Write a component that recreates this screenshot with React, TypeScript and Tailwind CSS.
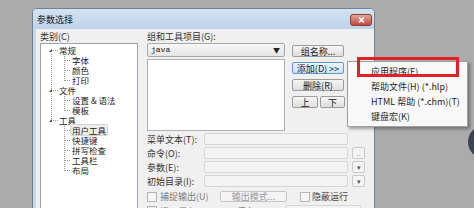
import React from 'react';

const cjk = { fontFamily: '"Noto Sans CJK SC", "Liberation Sans", sans-serif' };

type TreeRow = { label: string; level: 0 | 1; selected?: boolean };

const treeRows: TreeRow[] = [
  { label: '常规', level: 0 },
  { label: '字体', level: 1 },
  { label: '颜色', level: 1 },
  { label: '打印', level: 1 },
  { label: '文件', level: 0 },
  { label: '设置 & 语法', level: 1 },
  { label: '模板', level: 1 },
  { label: '工具', level: 0 },
  { label: '用户工具', level: 1, selected: true },
  { label: '快捷键', level: 1 },
  { label: '拼写检查', level: 1 },
  { label: '工具栏', level: 1 },
  { label: '布局', level: 1 },
];

const menuItems = ['应用程序(E)', '帮助文件(H) (*.hlp)', 'HTML 帮助 (*.chm)(T)', '键盘宏(K)'];

const Btn: React.FC<{ className?: string; active?: boolean; disabled?: boolean; children: React.ReactNode }> = ({
  className = '',
  active,
  disabled,
  children,
}) => (
  <div
    className={`flex items-center justify-center whitespace-nowrap rounded-[2px] border text-[9px] leading-none ${
      active
        ? 'border-[#5b9bd0] bg-gradient-to-b from-[#eaf4fc] to-[#c9e3f7] text-[#222]'
        : disabled
        ? 'border-[#c4c4c4] bg-[#f4f4f4] text-[#9a9a9a]'
        : 'border-[#9c9c9c] bg-gradient-to-b from-[#f6f6f6] to-[#dedede] text-[#222]'
    } ${className}`}
  >
    {children}
  </div>
);

const Field: React.FC<{ label: string; extra?: 'dots' | 'arrow' }> = ({ label, extra }) => (
  <div className="flex h-[12px] items-center">
    <div className="w-[57px] whitespace-nowrap text-[9px] leading-none text-[#333]">{label}</div>
    <div className="h-full w-[144px] rounded-[2px] border border-[#d6d6d6] bg-[#f3f3f3]" />
    {extra && (
      <div className="ml-[4px] flex h-[12px] w-[13px] items-center justify-center rounded-[2px] border border-[#c8c8c8] bg-[#f4f4f4] text-[7px] leading-none text-[#999]">
        {extra === 'dots' ? '..' : <span className="text-[#555]">▾</span>}
      </div>
    )}
  </div>
);

export default function App() {
  return (
    <div className="relative h-[208px] w-[474px] overflow-hidden bg-[#ababab]" style={cjk}>
      <div className="pl-[32px] pt-[8px]">
        <div className="w-[343px] overflow-hidden rounded-t-[5px] border border-[#6e8196] bg-[#f0f0f0]">
          {/* title bar */}
          <div className="flex h-[20px] items-center justify-between bg-gradient-to-b from-[#d5e3f1] to-[#bcd2e8] pl-[4px] pr-[2px]">
            <span className="text-[9px] leading-none text-[#1a1a1a]">参数选择</span>
            <div className="mt-[2px] flex h-[12px] w-[22px] items-center justify-center rounded-[3px] border border-[#8a3a30] bg-gradient-to-b from-[#e3a496] to-[#c0473a]">
              <svg width="7" height="6" viewBox="0 0 7 6">
                <path d="M1 0.5 L6 5.5 M6 0.5 L1 5.5" stroke="#fff" strokeWidth="1.6" />
              </svg>
            </div>
          </div>

          {/* body */}
          <div className="flex h-[220px] border-l-[3px] border-[#c8d9ea] pl-[4px] pt-[2px]">
            {/* category column */}
            <div className="w-[98px]">
              <div className="h-[12px] text-[9px] leading-[12px] text-[#333]">类别(C)</div>
              <div className="relative h-[200px] border border-[#9aa3ad] bg-white pt-[1px]">
                <svg className="absolute left-0 top-0" width="96" height="140">
                  <g stroke="#9a9a9a" strokeDasharray="1 1" strokeWidth="1">
                    <line x1="10.5" y1="10" x2="10.5" y2="46" />
                    <line x1="10.5" y1="50" x2="10.5" y2="76" />
                    <line x1="23.5" y1="10" x2="23.5" y2="37" />
                    <line x1="23.5" y1="50" x2="23.5" y2="67" />
                    <line x1="23.5" y1="80" x2="23.5" y2="127" />
                    <line x1="12" y1="6.5" x2="17" y2="6.5" />
                    <line x1="12" y1="46.5" x2="17" y2="46.5" />
                    <line x1="12" y1="76.5" x2="17" y2="76.5" />
                    {[16, 26, 36, 56, 66, 86, 96, 106, 116, 126].map((y) => (
                      <line key={y} x1="24" y1={y + 0.5} x2="30" y2={y + 0.5} />
                    ))}
                  </g>
                  {[6, 46, 76].map((y) => (
                    <path key={y} d={`M8 ${y + 2} L11 ${y + 2} L11 ${y - 1} Z`} fill="#444" />
                  ))}
                </svg>
                {treeRows.map((r) => (
                  <div
                    key={r.label}
                    className={`relative flex h-[10px] items-center whitespace-nowrap text-[8.5px] leading-none text-[#222] ${
                      r.level === 0 ? 'pl-[17px]' : 'pl-[30px]'
                    }`}
                  >
                    <span
                      className={`flex h-[10px] items-center px-[1px] ${
                        r.selected ? 'rounded-[1px] bg-[#ececec] outline outline-1 outline-[#d4d4d4]' : ''
                      }`}
                    >
                      {r.label}
                    </span>
                  </div>
                ))}
              </div>
            </div>

            {/* tools column */}
            <div className="ml-[9px] w-[220px]">
              <div className="h-[12px] text-[9px] leading-[12px] text-[#333]">组和工具项目(G):</div>
              <div className="flex">
                <div className="w-[138px]">
                  <div className="flex h-[14px] items-center justify-between rounded-[2px] border border-[#a8a8a8] bg-gradient-to-b from-[#f7f7f7] to-[#e4e4e4] pl-[3px] pr-[4px]">
                    <span className="text-[8px] leading-none text-[#222]" style={{ fontFamily: '"Liberation Mono", monospace' }}>
                      java
                    </span>
                    <span className="text-[7px] leading-none text-[#222]">▼</span>
                  </div>
                  <div className="mt-[2px] h-[72px] border border-[#a9b1ba] bg-white" />
                </div>
                <div className="ml-[7px] w-[53px]">
                  <Btn className="mt-[2px] h-[12px] w-[52px]">组名称...</Btn>
                  <Btn active className="mt-[5px] h-[12px] w-[52px]">
                    添加(D) &gt;&gt;
                  </Btn>
                  <Btn className="mt-[5px] h-[12px] w-[52px]">删除(R)</Btn>
                  <div className="mt-[5px] flex gap-[2px]">
                    <Btn className="h-[12px] w-[26px]">上</Btn>
                    <Btn className="h-[12px] w-[25px]">下</Btn>
                  </div>
                </div>
              </div>

              <div className="mt-[2px] flex flex-col gap-[2px]">
                <Field label="菜单文本(T):" />
                <Field label="命令(O):" extra="dots" />
                <Field label="参数(E):" extra="arrow" />
                <Field label="初始目录(I):" extra="arrow" />
              </div>

              <div className="mt-[4px] flex h-[11px] items-center whitespace-nowrap text-[9px] leading-none">
                <div className="h-[10px] w-[10px] border border-[#b5b5b5] bg-[#f6f6f6]" />
                <span className="ml-[3px] w-[60px] text-[#7a7a7a]">捕捉输出(U)</span>
                <Btn disabled className="h-[11px] w-[67px]">
                  输出模式...
                </Btn>
                <div className="ml-[13px] h-[10px] w-[10px] border border-[#b5b5b5] bg-[#f6f6f6]" />
                <span className="ml-[2px] text-[#444]">隐蔽运行</span>
              </div>

              <div className="mt-[3px] flex h-[12px] items-center whitespace-nowrap text-[9px] leading-none">
                <div className="h-[10px] w-[10px] border border-[#b5b5b5] bg-[#e9e9e9]" />
                <span className="ml-[3px] w-[77px] text-[#7a7a7a]">提示保存(A)</span>
                <span className="w-[49px] text-[#444]">保存(.):</span>
                <div className="h-full w-[75px] border border-[#d6d6d6] bg-[#f3f3f3]" />
              </div>
            </div>
          </div>
        </div>
      </div>

      {/* popup menu */}
      <div className="absolute left-[347px] top-[61px] h-[66px] w-[121px] border border-[#a0a0a0] bg-[#f8f8f8] pt-[2px] shadow-[2px_2px_3px_rgba(0,0,0,0.35)]">
        {menuItems.map((m) => (
          <div key={m} className="flex h-[15px] items-center whitespace-nowrap pl-[23px] text-[9px] leading-none text-[#1e1e1e]">
            {m}
          </div>
        ))}
      </div>

      {/* red annotation */}
      <div className="absolute left-[357px] top-[57px] h-[20px] w-[102px] border-[3px] border-[#e3202a]" />

      {/* dark round widget at the edge */}
      <div className="absolute left-[468px] top-[125px] h-[34px] w-[34px] rounded-full bg-[#3b4252]" />
    </div>
  );
}
